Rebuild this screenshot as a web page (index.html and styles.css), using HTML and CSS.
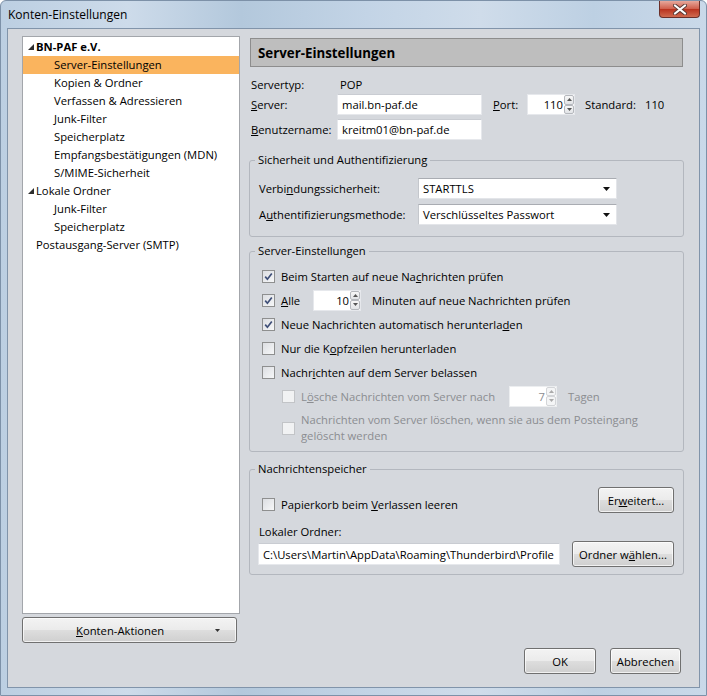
FILE: index.html
```html
<!DOCTYPE html>
<html>
<head>
    <title>Konten-Einstellungen</title>
    <link rel="stylesheet" href="styles.css">
</head>
<body>
<div class="window">
    <div class="titlebar">
        <span class="title">Konten-Einstellungen</span>
        <div class="close">
            <svg width="14" height="11" viewBox="0 0 14 11">
                <path d="M2 1.5 L12 9.5 M12 1.5 L2 9.5" stroke="#5a3a36" stroke-width="4" stroke-linecap="round"/>
                <path d="M2 1.5 L12 9.5 M12 1.5 L2 9.5" stroke="#ffffff" stroke-width="2.2" stroke-linecap="round"/>
            </svg>
        </div>
    </div>

    <div class="client">
        <div class="main">
            <div class="sidebar">
                <div class="tree">
                    <div class="tree-row parent bold"><svg class="twisty" width="6" height="6" viewBox="0 0 6 6"><polygon points="6,0 6,6 0,6" fill="#2e2e2e"/></svg>BN-PAF e.V.</div>
                    <div class="tree-row child selected">Server-Einstellungen</div>
                    <div class="tree-row child">Kopien &amp; Ordner</div>
                    <div class="tree-row child">Verfassen &amp; Adressieren</div>
                    <div class="tree-row child">Junk-Filter</div>
                    <div class="tree-row child">Speicherplatz</div>
                    <div class="tree-row child">Empfangsbestätigungen (MDN)</div>
                    <div class="tree-row child">S/MIME-Sicherheit</div>
                    <div class="tree-row parent"><svg class="twisty" width="6" height="6" viewBox="0 0 6 6"><polygon points="6,0 6,6 0,6" fill="#2e2e2e"/></svg>Lokale Ordner</div>
                    <div class="tree-row child">Junk-Filter</div>
                    <div class="tree-row child">Speicherplatz</div>
                    <div class="tree-row parent no-twisty">Postausgang-Server (SMTP)</div>
                </div>
                <div class="button actions">
                    <span class="actions-label"><u>K</u>onten-Aktionen</span>
                    <svg class="actions-arrow" width="5" height="3" viewBox="0 0 5 3"><polygon points="0,0 5,0 2.5,3" fill="#333"/></svg>
                </div>
            </div>

            <div class="content">
                <div class="header">Server-Einstellungen</div>

                <div class="server-info">
                    <div class="info-row short">
                        <span class="info-label">Servertyp:</span>
                        <span class="info-value">POP</span>
                    </div>
                    <div class="info-row">
                        <span class="info-label"><u>S</u>erver:</span>
                        <span class="textbox host">mail.bn-paf.de</span>
                        <span class="port-label"><u>P</u>ort:</span>
                        <span class="spin">
                            <span class="spin-value">110</span>
                            <span class="spin-btns">
                                <span class="spin-btn"><svg width="5" height="3" viewBox="0 0 5 3"><polygon points="0,3 5,3 2.5,0" fill="#555"/></svg></span>
                                <span class="spin-btn"><svg width="5" height="3" viewBox="0 0 5 3"><polygon points="0,0 5,0 2.5,3" fill="#555"/></svg></span>
                            </span>
                        </span>
                        <span class="default-label">Standard:</span>
                        <span>110</span>
                    </div>
                    <div class="info-row user-row">
                        <span class="info-label"><u>B</u>enutzername:</span>
                        <span class="textbox host">kreitm01@bn-paf.de</span>
                    </div>
                </div>

                <fieldset class="group security">
                    <legend>Sicherheit und Authentifizierung</legend>
                    <div class="select-row">
                        <span class="select-label">Verbi<u>n</u>dungssicherheit:</span>
                        <span class="select">STARTTLS<svg width="7" height="4" viewBox="0 0 7 4"><polygon points="0,0 7,0 3.5,4" fill="#111"/></svg></span>
                    </div>
                    <div class="select-row">
                        <span class="select-label">A<u>u</u>thentifizierungsmethode:</span>
                        <span class="select">Verschlüsseltes Passwort<svg width="7" height="4" viewBox="0 0 7 4"><polygon points="0,0 7,0 3.5,4" fill="#111"/></svg></span>
                    </div>
                </fieldset>

                <fieldset class="group server-settings">
                    <legend>Server-Einstellungen</legend>
                    <div class="check-row first">
                        <span class="checkbox checked"><svg width="11" height="11" viewBox="0 0 11 11"><path d="M2.2 5.6 L4.4 8.2 L8.8 2.4" fill="none" stroke="#3f4f78" stroke-width="1.7"/></svg></span>
                        <span>Beim Starten auf neue Na<u>c</u>hrichten prüfen</span>
                    </div>
                    <div class="check-row">
                        <span class="checkbox checked"><svg width="11" height="11" viewBox="0 0 11 11"><path d="M2.2 5.6 L4.4 8.2 L8.8 2.4" fill="none" stroke="#3f4f78" stroke-width="1.7"/></svg></span>
                        <span class="alle"><u>A</u>lle</span>
                        <span class="spin">
                            <span class="spin-value">10</span>
                            <span class="spin-btns">
                                <span class="spin-btn"><svg width="5" height="3" viewBox="0 0 5 3"><polygon points="0,3 5,3 2.5,0" fill="#555"/></svg></span>
                                <span class="spin-btn"><svg width="5" height="3" viewBox="0 0 5 3"><polygon points="0,0 5,0 2.5,3" fill="#555"/></svg></span>
                            </span>
                        </span>
                        <span class="after-spin">Minuten auf neue Nachrichten prüfen</span>
                    </div>
                    <div class="check-row">
                        <span class="checkbox checked"><svg width="11" height="11" viewBox="0 0 11 11"><path d="M2.2 5.6 L4.4 8.2 L8.8 2.4" fill="none" stroke="#3f4f78" stroke-width="1.7"/></svg></span>
                        <span>Neue Nachrichten automatisch herunterla<u>d</u>en</span>
                    </div>
                    <div class="check-row">
                        <span class="checkbox"></span>
                        <span>Nur die K<u>o</u>pfzeilen herunterladen</span>
                    </div>
                    <div class="check-row">
                        <span class="checkbox"></span>
                        <span>Nachr<u>i</u>chten auf dem Server belassen</span>
                    </div>
                    <div class="check-row indent disabled">
                        <span class="checkbox"></span>
                        <span class="delete-label">L<u>ö</u>sche Nachrichten vom Server nach</span>
                        <span class="spin">
                            <span class="spin-value">7</span>
                            <span class="spin-btns">
                                <span class="spin-btn"><svg width="5" height="3" viewBox="0 0 5 3"><polygon points="0,3 5,3 2.5,0" fill="#aaa"/></svg></span>
                                <span class="spin-btn"><svg width="5" height="3" viewBox="0 0 5 3"><polygon points="0,0 5,0 2.5,3" fill="#aaa"/></svg></span>
                            </span>
                        </span>
                        <span class="after-spin">Tagen</span>
                    </div>
                    <div class="check-row indent disabled two-line">
                        <span class="checkbox"></span>
                        <span>Nachrichten vom Server löschen, wenn sie aus dem Postein<u>g</u>ang<br>gelöscht werden</span>
                    </div>
                </fieldset>

                <fieldset class="group storage">
                    <legend>Nachrichtenspeicher</legend>
                    <div class="storage-row">
                        <div class="check-row trash">
                            <span class="checkbox"></span>
                            <span>Papierkorb beim <u>V</u>erlassen leeren</span>
                        </div>
                        <div class="button advanced">Er<u>w</u>eitert...</div>
                    </div>
                    <div class="folder-label">Lokaler Ordner:</div>
                    <div class="storage-row path-row">
                        <span class="textbox path">C:\Users\Martin\AppData\Roaming\Thunderbird\Profile</span>
                        <div class="button choose">Ordner w<u>ä</u>hlen...</div>
                    </div>
                </fieldset>
            </div>
        </div>

        <div class="footer">
            <div class="button ok">OK</div>
            <div class="button cancel">Abbrechen</div>
        </div>
    </div>
</div>
</body>
</html>
```

FILE: styles.css
```css
body {
    margin: 0;
    font-family: "Open Sans", "Noto Sans", sans-serif;
    font-size: 11.25px;
    color: #000;
}

.window {
    width: 707px;
    height: 696px;
    display: flex;
    flex-direction: column;
    background: linear-gradient(90deg, #bccfe2 0%, #cddbea 18%, #b3c8dc 34%, #c3d4e6 52%, #cfdcea 68%, #bdd0e3 84%, #cad9e9 100%);
    box-sizing: border-box;
    border: 1px solid #7d91a8;
    border-radius: 6px 6px 0 0;
}

.titlebar {
    height: 27px;
    display: flex;
    padding-left: 7px;
}

.title {
    font-size: 12px;
    line-height: 27px;
    color: #000;
}

.close {
    margin-left: auto;
    margin-right: 6px;
    width: 41px;
    height: 17px;
    box-sizing: border-box;
    border: 1px solid #6b2f29;
    border-top: none;
    border-radius: 0 0 4px 4px;
    background: linear-gradient(#e7a89c, #d0604d 48%, #b9331f 52%, #cf6a4f);
    display: flex;
    align-items: center;
    justify-content: center;
}

.client {
    flex: 1;
    margin: 0 6px 7px 6px;
    display: flex;
    flex-direction: column;
    background: #d5d8dd;
    border: 1px solid #8194aa;
    padding: 7px 15px 13px 14px;
}

.main {
    flex: 1;
    display: flex;
}

/* left side */
.sidebar {
    width: 218px;
    display: flex;
    flex-direction: column;
}

.tree {
    flex: 1;
    background: #fff;
    border: 1px solid #a3a6ab;
    padding-top: 1px;
}

.tree-row {
    height: 18px;
    line-height: 18px;
    display: flex;
    align-items: center;
    white-space: nowrap;
}

.tree-row.parent {
    padding-left: 5px;
}

.tree-row.no-twisty {
    padding-left: 13px;
}

.tree-row.child {
    padding-left: 31px;
}

.tree-row.bold {
    font-weight: bold;
}

.tree-row.selected {
    background: #fab45e;
}

.twisty {
    margin-right: 2px;
}

.actions {
    margin-top: 3px;
    width: 215px;
    height: 28px;
    justify-content: flex-start;
    padding-left: 53px;
}

.actions-arrow {
    margin-left: auto;
    margin-right: 16px;
}

/* right side */
.content {
    margin-left: 9px;
    width: 435px;
    display: flex;
    flex-direction: column;
}

.header {
    margin: 2px 1px 0 1px;
    height: 29px;
    box-sizing: border-box;
    background: #bebebe;
    border: 1px solid #8d8d8d;
    padding-left: 7px;
    font-size: 13.3px;
    font-weight: bold;
    line-height: 28px;
}

.server-info {
    margin-top: 9px;
    margin-left: 2px;
}

.info-row {
    height: 21px;
    display: flex;
    align-items: center;
    white-space: nowrap;
}

.info-row.short {
    height: 16px;
    margin-bottom: 2px;
}

.info-row.user-row {
    margin-top: 4px;
}

.info-label {
    width: 86px;
}

.info-value {
    padding-left: 3px;
}

.textbox {
    display: flex;
    align-items: center;
    box-sizing: border-box;
    height: 21px;
    background: #fff;
    border: 1px solid #e6e8ec;
    border-top-color: #c9ccd2;
    padding-left: 4px;
    overflow: hidden;
    white-space: nowrap;
}

.host {
    width: 145px;
}

.port-label {
    margin-left: 11px;
    width: 34px;
}

.default-label {
    margin-left: 10px;
    width: 60px;
}

.spin {
    display: flex;
    width: 48px;
    height: 21px;
    box-sizing: border-box;
    background: #fff;
    border: 1px solid #e6e8ec;
}

.spin-value {
    flex: 1;
    text-align: right;
    line-height: 19px;
    padding-right: 1px;
}

.spin-btns {
    width: 10px;
    display: flex;
    flex-direction: column;
}

.spin-btn {
    flex: 1;
    display: flex;
    align-items: center;
    justify-content: center;
    background: linear-gradient(#f7f7f7, #e2e4e7);
    border: 1px solid #b5b8bd;
    border-radius: 2px;
}

/* group boxes */
.group {
    margin: 0;
    border: 1px solid #b3b7be;
    border-radius: 3px;
    padding: 0 9px 0 5px;
}

.group legend {
    padding: 0 3px;
    line-height: 16px;
}

.security {
    margin-top: 12px;
    padding-bottom: 11px;
}

.select-row {
    display: flex;
    align-items: center;
    height: 21px;
    margin-top: 5px;
    padding-left: 4px;
}

.select-row:first-of-type {
    margin-top: 10px;
}

.select-label {
    width: 159px;
}

.select {
    width: 199px;
    height: 21px;
    box-sizing: border-box;
    display: flex;
    align-items: center;
    justify-content: space-between;
    background: #fff;
    border: 1px solid #e3e5e9;
    border-top-color: #a9acb2;
    border-left-color: #c4c7cc;
    padding: 0 6px 0 4px;
}

.server-settings {
    margin-top: 6px;
    padding-bottom: 7px;
}

.check-row {
    display: flex;
    align-items: center;
    height: 24px;
    padding-left: 7px;
    white-space: nowrap;
}

.check-row.first {
    margin-top: 5px;
}

.check-row.indent {
    padding-left: 27px;
}

.check-row.two-line {
    height: 32px;
    margin-top: 4px;
    line-height: 16px;
}

.checkbox {
    width: 13px;
    height: 13px;
    box-sizing: border-box;
    margin-right: 6px;
    border: 1px solid #8e8f8f;
    background: linear-gradient(135deg, #dcdee2, #f6f7f8);
    display: flex;
    align-items: center;
    justify-content: center;
    flex-shrink: 0;
}

.disabled {
    color: #8b8d91;
}

.disabled .checkbox {
    border-color: #c2c4c7;
    background: #f1f2f3;
}

.disabled .spin {
    border-color: #eceef0;
}

.disabled .spin-btn {
    background: #f4f5f6;
    border-color: #d3d5d8;
}

.alle {
    width: 32px;
}

.delete-label {
    width: 208px;
}

.after-spin {
    margin-left: 11px;
}

.storage {
    margin-top: 9px;
    padding-bottom: 7px;
}

.storage-row {
    display: flex;
    align-items: center;
    justify-content: space-between;
}

.storage-row:first-of-type {
    margin-top: 7px;
}

.trash {
    margin-top: 8px;
}

.folder-label {
    margin-top: 8px;
    padding-left: 4px;
    line-height: 16px;
}

.path-row {
    margin-top: 1px;
}

.path {
    margin-left: 3px;
    width: 302px;
    height: 22px;
}

/* buttons */
.button {
    box-sizing: border-box;
    height: 26px;
    display: flex;
    align-items: center;
    justify-content: center;
    border: 1px solid #707070;
    border-radius: 3px;
    background: linear-gradient(#f3f3f3, #ebebeb 48%, #dddddd 52%, #cfcfcf);
    box-shadow: inset 0 0 0 1px rgba(255, 255, 255, 0.7);
    white-space: nowrap;
}

.advanced {
    width: 76px;
}

.choose {
    width: 102px;
}

.footer {
    margin-top: 5px;
    display: flex;
    justify-content: flex-end;
    gap: 14px;
    padding-right: 3px;
}

.ok {
    width: 72px;
}

.cancel {
    width: 71px;
}
```
